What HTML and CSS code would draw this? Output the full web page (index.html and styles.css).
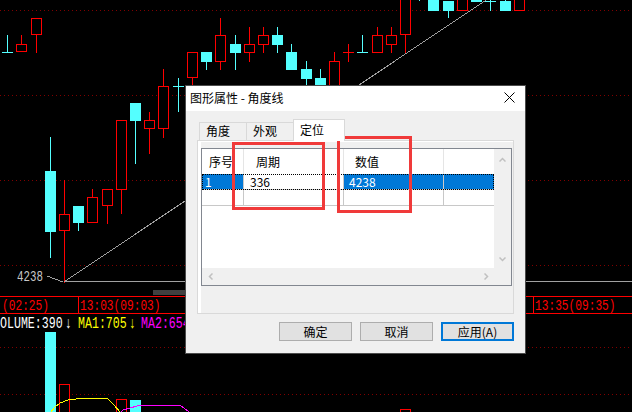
FILE: index.html
```html
<!DOCTYPE html>
<html lang="zh">

<head>
  <title>图形属性 - 角度线</title>
  <meta charset="utf-8">
  <link rel="stylesheet" href="styles.css">
</head>

<body>
  <div class="screen">
    <!-- K-line chart -->
    <svg class="chart" width="632" height="412" viewBox="0 0 632 412">
      <g class="grid">
        <line x1="0" y1="10.5" x2="632" y2="10.5" />
        <line x1="0" y1="95.5" x2="632" y2="95.5" />
        <line x1="0" y1="180.5" x2="632" y2="180.5" />
        <line x1="0" y1="265.5" x2="632" y2="265.5" />
        <line x1="0" y1="347.5" x2="632" y2="347.5" />
        <line x1="0" y1="394.5" x2="632" y2="394.5" />
      </g>

      <!-- rising candles -->
      <g class="up">
        <line x1="21.5" y1="35" x2="21.5" y2="44" /><rect x="16.5" y="44.5" width="10" height="7" />
        <line x1="36.5" y1="34" x2="36.5" y2="53" /><rect x="31.5" y="18.5" width="10" height="16" />
        <line x1="64.5" y1="180" x2="64.5" y2="283" /><rect x="59.5" y="214.5" width="10" height="16" />
        <line x1="92.5" y1="189" x2="92.5" y2="197" /><rect x="87.5" y="197.5" width="10" height="25" />
        <line x1="107.5" y1="205" x2="107.5" y2="224" /><rect x="102.5" y="189.5" width="10" height="16" />
        <line x1="121.5" y1="189" x2="121.5" y2="214" /><rect x="116.5" y="120.5" width="10" height="69" />
        <line x1="149.5" y1="112" x2="149.5" y2="154" /><rect x="144.5" y="120.5" width="10" height="8" />
        <line x1="163.5" y1="69" x2="163.5" y2="138" /><rect x="158.5" y="86.5" width="10" height="42" />
        <line x1="192.5" y1="77" x2="192.5" y2="86" /><rect x="187.5" y="52.5" width="10" height="25" />
        <line x1="220.5" y1="18" x2="220.5" y2="70" /><rect x="215.5" y="35.5" width="10" height="26" />
        <line x1="249.5" y1="27" x2="249.5" y2="62" /><rect x="244.5" y="44.5" width="10" height="8" />
        <line x1="263.5" y1="27" x2="263.5" y2="53" /><rect x="258.5" y="35.5" width="10" height="9" />
        <line x1="334.5" y1="52" x2="334.5" y2="100" /><rect x="329.5" y="61.5" width="10" height="40" />
        <line x1="343" y1="52.5" x2="354" y2="52.5" /><line x1="348.5" y1="44" x2="348.5" y2="62" />
        <line x1="377.5" y1="27" x2="377.5" y2="36" /><rect x="372.5" y="35.5" width="10" height="17" />
        <line x1="391.5" y1="27" x2="391.5" y2="53" /><rect x="386.5" y="35.5" width="10" height="9" />
        <line x1="405.5" y1="34" x2="405.5" y2="53" /><rect x="400.5" y="-5.5" width="10" height="40" />
        <rect x="457.5" y="-5.5" width="10" height="16" />
        <rect x="514.5" y="-5.5" width="10" height="16" />
        <!-- volume -->
        <rect x="59.5" y="384.5" width="10" height="30" />
        <rect x="116.5" y="399.5" width="10" height="20" />
        <rect x="400.5" y="409.5" width="10" height="10" />
      </g>

      <!-- falling candles -->
      <g class="down">
        <line x1="7.5" y1="35" x2="7.5" y2="52" /><line x1="2" y1="52.5" x2="13" y2="52.5" />
        <line x1="50.5" y1="137" x2="50.5" y2="258" /><rect x="45" y="171" width="11" height="61" />
        <line x1="78.5" y1="222" x2="78.5" y2="231" /><rect x="73" y="206" width="11" height="17" />
        <line x1="135.5" y1="120" x2="135.5" y2="164" /><rect x="130" y="103" width="11" height="18" />
        <line x1="173" y1="86.5" x2="184" y2="86.5" /><line x1="178.5" y1="78" x2="178.5" y2="112" />
        <line x1="206.5" y1="61" x2="206.5" y2="70" /><rect x="201" y="52" width="11" height="10" />
        <line x1="235.5" y1="35" x2="235.5" y2="70" /><rect x="230" y="44" width="11" height="9" />
        <line x1="277.5" y1="27" x2="277.5" y2="53" /><rect x="272" y="35" width="11" height="10" />
        <line x1="291.5" y1="44" x2="291.5" y2="53" /><rect x="286" y="52" width="11" height="18" />
        <line x1="306.5" y1="61" x2="306.5" y2="86" /><rect x="301" y="69" width="11" height="10" />
        <line x1="320.5" y1="69" x2="320.5" y2="79" /><rect x="315" y="78" width="11" height="22" />
        <line x1="357" y1="52.5" x2="368" y2="52.5" /><line x1="362.5" y1="35" x2="362.5" y2="52" />
        <line x1="419.5" y1="-5" x2="419.5" y2="1" />
        <rect x="428" y="-5" width="11" height="16" />
        <line x1="448.5" y1="10" x2="448.5" y2="18" /><rect x="443" y="1" width="11" height="10" />
        <rect x="471" y="-5" width="11" height="7" />
        <line x1="485" y1="1.5" x2="496" y2="1.5" /><line x1="490.5" y1="-5" x2="490.5" y2="11" />
        <line x1="505.5" y1="-5" x2="505.5" y2="1" /><rect x="500" y="1" width="11" height="10" />
        <!-- volume -->
        <rect x="45" y="332" width="11" height="81" />
        <rect x="130" y="400" width="11" height="13" />
      </g>

      <polyline class="ma1" points="50,413 55,407 60,403 68,400 85,398 107,398 113,404 121,413" />
      <polyline class="ma2" points="120,413 123,410 137,406 157,405 180,405 188,411 189,413" />

      <!-- angle line -->
      <g class="angle">
        <line x1="64" y1="281.5" x2="632" y2="281.5" />
        <line x1="64.5" y1="281.5" x2="490" y2="-2.5" />
        <line x1="47" y1="276" x2="63" y2="282" />
      </g>
      <text class="price" transform="translate(17 281) scale(1 1.3)">4238</text>

      <rect class="scroller" x="153" y="290" width="33" height="5" />

      <!-- time axis -->
      <g class="axis">
        <line x1="0" y1="296.5" x2="632" y2="296.5" />
        <line x1="0" y1="313.5" x2="632" y2="313.5" />
        <line x1="78.5" y1="297" x2="78.5" y2="313" />
        <line x1="533.5" y1="297" x2="533.5" y2="313" />
      </g>
      <text class="time" transform="translate(2 310) scale(1 1.3)">(02:25)</text>
      <text class="time" transform="translate(80 310) scale(1 1.3)">13:03(09:03)</text>
      <text class="time" transform="translate(535 310) scale(1 1.3)">13:35(09:35)</text>

      <!-- volume indicator line -->
      <text class="ind white" transform="translate(0 328) scale(1 1.4)">OLUME:390</text>
      <text class="ind white" transform="translate(65 328) scale(1 1.4)">↓</text>
      <text class="ind yellow" transform="translate(78 328) scale(1 1.4)">MA1:705</text>
      <text class="ind yellow" transform="translate(129 328) scale(1 1.4)">↓</text>
      <text class="ind magenta" transform="translate(141 328) scale(1 1.4)">MA2:654</text>
    </svg>

    <!-- Properties dialog -->
    <div class="dialog">
      <div class="titlebar">
        <span>图形属性 - 角度线</span>
        <svg class="close" width="11" height="11" viewBox="0 0 11 11">
          <path d="M0.5 0.5L10.5 10.5M10.5 0.5L0.5 10.5" />
        </svg>
      </div>
      <div class="dialog-body">
        <div class="tabs">
          <div class="tab">角度</div>
          <div class="tab">外观</div>
          <div class="tab active">定位</div>
        </div>
        <div class="panel">
          <div class="listview">
            <div class="lv-main">
              <div class="lv-table">
                <div class="lv-row lv-head">
                  <div class="cell c1">序号</div>
                  <div class="cell c2">周期</div>
                  <div class="cell c3">数值</div>
                  <div class="cell c4"></div>
                </div>
                <div class="lv-row selected">
                  <div class="cell c1">1</div>
                  <div class="cell c2">336</div>
                  <div class="cell c3">4238</div>
                  <div class="cell c4"></div>
                </div>
                <div class="lv-row">
                  <div class="cell c1"></div>
                  <div class="cell c2"></div>
                  <div class="cell c3"></div>
                  <div class="cell c4"></div>
                </div>
              </div>
              <div class="vscroll">
                <svg class="chev" width="7" height="5" viewBox="0 0 7 5"><path d="M0.5 4.5L3.5 1.5L6.5 4.5" /></svg>
                <svg class="chev" width="7" height="5" viewBox="0 0 7 5"><path d="M0.5 0.5L3.5 3.5L6.5 0.5" /></svg>
              </div>
            </div>
            <div class="hscroll">
              <div class="hbar">
                <svg class="chev" width="5" height="7" viewBox="0 0 5 7"><path d="M4.5 0.5L1.5 3.5L4.5 6.5" /></svg>
                <svg class="chev" width="5" height="7" viewBox="0 0 5 7"><path d="M0.5 0.5L3.5 3.5L0.5 6.5" /></svg>
              </div>
              <div class="corner"></div>
            </div>
          </div>
        </div>
        <div class="buttons">
          <button class="btn">确定</button>
          <button class="btn">取消</button>
          <button class="btn default">应用(A)</button>
        </div>
      </div>
    </div>

    <!-- red boxes marked on the screenshot -->
    <div class="mark mark-period"></div>
    <div class="mark mark-value"></div>
  </div>
</body>

</html>
```

FILE: styles.css
```css
* {
  box-sizing: border-box;
}

body {
  margin: 0;
  background-color: #000;
  font-family: "Noto Sans CJK SC", "Noto Sans", sans-serif;
  font-size: 12px;
}

.screen {
  position: relative;
  width: 632px;
  height: 412px;
  overflow: hidden;
  background-color: #000;
}

/* Chart */
.chart {
  display: block;
  shape-rendering: crispEdges;
}

.chart text {
  font-family: "Liberation Mono", "DejaVu Sans Mono", monospace;
}

.grid line {
  stroke: #800000;
  stroke-dasharray: 1 3;
}

.up line {
  stroke: #ff0000;
}

.up rect {
  fill: #000;
  stroke: #ff0000;
}

.down line {
  stroke: #54ffff;
}

.down rect {
  fill: #54ffff;
}

.ma1 {
  fill: none;
  stroke: #ffff00;
}

.ma2 {
  fill: none;
  stroke: #ff00ff;
}

.angle line {
  stroke: #a0a0a0;
}

.price {
  font-size: 10.8px;
  fill: #c8c8c8;
}

.scroller {
  fill: #404040;
}

.axis line {
  stroke: #ff0000;
}

.time {
  font-size: 11.2px;
  fill: #ff0000;
}

.ind {
  font-size: 11.6px;
}

.white {
  fill: #ffffff;
}

.yellow {
  fill: #ffff00;
}

.magenta {
  fill: #ff00ff;
}

/* Dialog window */
.dialog {
  position: absolute;
  left: 185px;
  top: 85px;
  width: 341px;
  height: 269px;
  border: 1px solid #4b4b4b;
  background-color: #f0f0f0;
  color: #000;
  display: flex;
  flex-direction: column;
}

.titlebar {
  flex: none;
  height: 25px;
  background-color: #fff;
  display: flex;
  align-items: center;
  justify-content: space-between;
  padding: 0 10px 2px 4px;
  line-height: 14px;
}

.close path {
  stroke: #000;
  stroke-width: 1;
}

.dialog-body {
  flex: 1;
  display: flex;
  flex-direction: column;
  padding: 8px 11px 12px 11px;
}

/* Tabs */
.tabs {
  display: flex;
  align-items: flex-end;
  height: 21px;
  padding-left: 2px;
}

.tab {
  width: 48px;
  height: 18px;
  margin-right: -1px;
  padding-left: 6px;
  border: 1px solid #d9d9d9;
  border-bottom: none;
  background-color: #f0f0f0;
  line-height: 16px;
}

.tab.active {
  position: relative;
  z-index: 1;
  width: 52px;
  height: 22px;
  margin-bottom: -1px;
  background-color: #fff;
  line-height: 19px;
}

.panel {
  height: 174px;
  border: 1px solid #d9d9d9;
  box-shadow: inset 3px 1px #fff;
  padding: 7px 1px 0 3px;
}

/* List view */
.listview {
  height: 138px;
  border: 1px solid #828790;
  background-color: #fff;
  display: flex;
  flex-direction: column;
}

.lv-main {
  flex: 1;
  display: flex;
}

.lv-table {
  flex: 1;
}

.lv-row {
  display: flex;
  height: 16px;
  border-bottom: 1px solid #c8c8c8;
  line-height: 15px;
}

.lv-head {
  height: 25px;
  border-bottom: none;
  line-height: 25px;
}

.cell {
  border-right: 1px solid #c8c8c8;
  white-space: nowrap;
}

.lv-head .cell {
  border-right-color: #e5e5e5;
}

.c1 {
  width: 42px;
  padding-left: 3px;
}

.c2 {
  width: 100px;
  padding-left: 6px;
}

.c3 {
  width: 100px;
  padding-left: 5px;
}

.c4 {
  flex: 1;
  border-right: none;
}

.lv-head .c1 {
  padding-left: 7px;
}

.lv-head .c2 {
  padding-left: 12px;
}

.lv-head .c3 {
  padding-left: 11px;
}

.selected {
  outline: 1px dotted #000;
  outline-offset: -1px;
}

.selected .c1,
.selected .c3,
.selected .c4 {
  background-color: #0078d7;
  color: #fff;
}

/* Scroll bars */
.vscroll {
  width: 17px;
  background-color: #f0f0f0;
  display: flex;
  flex-direction: column;
  justify-content: space-between;
  align-items: center;
  padding: 8px 0 6px;
}

.hscroll {
  height: 17px;
  display: flex;
}

.hbar {
  flex: 1;
  background-color: #f0f0f0;
  display: flex;
  justify-content: space-between;
  align-items: center;
  padding: 0 5px 0 6px;
}

.corner {
  width: 17px;
  background-color: #f0f0f0;
}

.chev path {
  fill: none;
  stroke: #c0c0c0;
  stroke-width: 1.5;
}

/* Buttons */
.buttons {
  display: flex;
  justify-content: flex-end;
  gap: 8px;
  margin-top: 8px;
}

.btn {
  width: 73px;
  height: 19px;
  padding: 0;
  border: 1px solid #adadad;
  background-color: #e1e1e1;
  color: #000;
  font-family: "Noto Sans CJK SC", "Noto Sans", sans-serif;
  font-size: 12px;
  line-height: 17px;
}

.btn.default {
  border: 2px solid #0078d7;
  line-height: 15px;
}

/* Red marker boxes */
.mark {
  position: absolute;
  border: 3px solid #f03a3a;
}

.mark-period {
  left: 232px;
  top: 142px;
  width: 93px;
  height: 68px;
}

.mark-value {
  left: 337px;
  top: 136px;
  width: 75px;
  height: 77px;
}
```
